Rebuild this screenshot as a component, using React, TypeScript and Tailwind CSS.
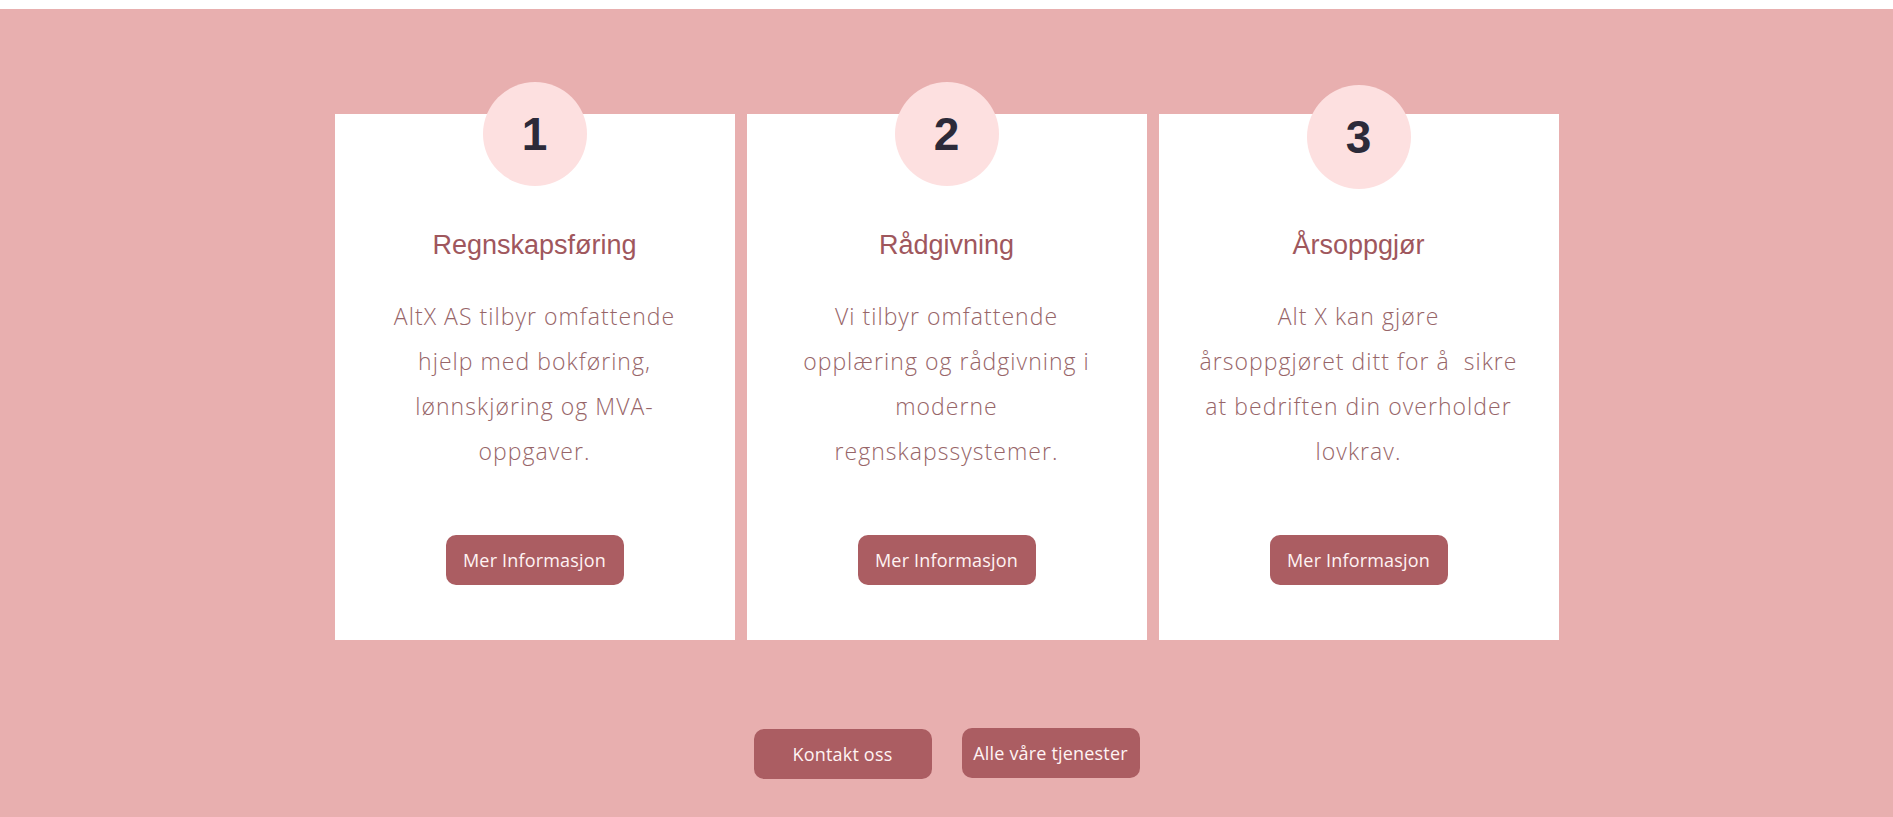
const cards = [
  {
    nr: '1',
    titel: 'Regnskapsføring',
    linjer: ['AltX AS tilbyr omfattende', 'hjelp med bokføring,', 'lønnskjøring og MVA-', 'oppgaver.'],
    sirkel: '',
  },
  {
    nr: '2',
    titel: 'Rådgivning',
    linjer: ['Vi tilbyr omfattende', 'opplæring og rådgivning i', 'moderne', 'regnskapssystemer.'],
    sirkel: '',
  },
  {
    nr: '3',
    titel: 'Årsoppgjør',
    linjer: ['Alt X kan gjøre', 'årsoppgjøret ditt for å\u00a0 sikre', 'at bedriften din overholder', 'lovkrav.'],
    sirkel: 'translate-y-[3px]',
  },
];

const knapp =
  'flex h-[50px] w-[178px] items-center justify-center rounded-[10px] bg-[#ab5d62] text-[18px] tracking-[0.01em] text-[#fff3f3] font-["Open_Sans","Lato",sans-serif]';

export default function App() {
  return (
    <div className="min-h-[817px] bg-white pt-[9px]">
      <section className="flex min-h-[808px] flex-col items-center bg-[#e8afaf] pt-[105px] pb-[38px]">
        <div className="flex gap-[12px]">
          {cards.map((c) => (
            <Kort key={c.nr} {...c} />
          ))}
        </div>

        <div className="mt-[88px] flex items-start gap-[30px]">
          <button className={`mt-px ${knapp}`}>Kontakt oss</button>
          <button className={knapp}>Alle våre tjenester</button>
        </div>
      </section>
    </div>
  );
}

function Kort({ nr, titel, linjer, sirkel }: { nr: string; titel: string; linjer: string[]; sirkel: string }) {
  return (
    <div className="flex w-[400px] flex-col items-center bg-white pb-[55px]">
      <div
        className={`-mt-[32px] ${sirkel} flex h-[104px] w-[104px] items-center justify-center rounded-full bg-[#fde0e0] font-['Liberation_Sans',Arial,sans-serif] text-[46px] font-bold text-[#2c2a39]`}
      >
        {nr}
      </div>
      <h3 className="mt-[43px] font-['Liberation_Sans',Arial,sans-serif] text-[27px] leading-[32px] text-[#9f575d]">
        {titel}
      </h3>
      <p className="mt-[33px] text-center font-['Open_Sans','Lato',sans-serif] text-[23px] font-light leading-[45px] tracking-[0.045em] text-[#976568]">
        {linjer.map((l) => (
          <span key={l} className="block whitespace-pre">
            {l}
          </span>
        ))}
      </p>
      <button className={`mt-[61px] ${knapp}`}>Mer Informasjon</button>
    </div>
  );
}
